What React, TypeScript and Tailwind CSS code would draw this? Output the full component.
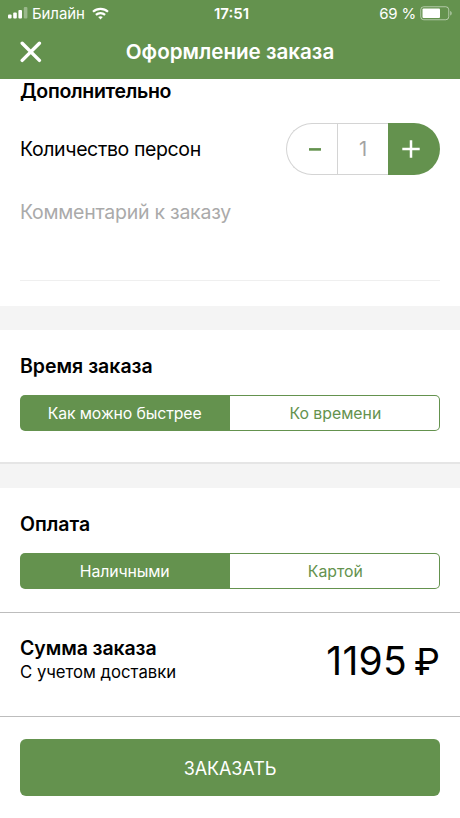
import { useState } from 'react';

type SegmentedProps = { options: string[]; value: string; onChange: (value: string) => void };

function Segmented({ options, value, onChange }: SegmentedProps) {
  return (
    <div className="flex h-9 rounded-[5px] overflow-hidden bg-[#64924e] p-[1.3px] text-[15.8px]">
      {options.map((option) => (
        <button key={option} onClick={() => onChange(option)} className={`flex-1 basis-0 pt-0.5 leading-none whitespace-nowrap first:pr-0.5 last:pl-0.5 first:rounded-l-[4px] last:rounded-r-[4px] first:tracking-[-0.1px] ${option === value ? 'bg-[#64924e] text-white' : 'bg-white text-[#64924e]'}`}>{option}</button>
      ))}
    </div>
  );
}

function StatusBar() {
  return (
    <div className="grid grid-cols-3 items-center h-[26px] pl-2 pr-[7px] text-[15px] leading-none">
      <div className="flex items-center">
        <svg width="20" height="12" viewBox="0 0 20 12" fill="currentColor">
          <rect x="0" y="7.5" width="3.6" height="4" rx="1" />
          <rect x="5.2" y="5.5" width="3.6" height="6" rx="1" />
          <rect x="10.4" y="3" width="3.6" height="8.5" rx="1" />
          <rect x="15.8" y="0" width="3.6" height="11.5" rx="1" opacity="0.35" />
        </svg>
        <span className="ml-1 tracking-[-0.1px]">Билайн</span>
        <svg width="17" height="13" viewBox="0 0 17 13" className="ml-[7px]" fill="none" stroke="currentColor" strokeWidth="2.2">
          <path d="M1 4.8C5.2.9 11.8.9 16 4.8" />
          <path d="M3.9 7.9c2.6-2.4 6.6-2.4 9.2 0" />
          <path d="M8.5 12.5L6.2 10.1c1.3-1.2 3.3-1.2 4.6 0z" fill="currentColor" stroke="none" />
        </svg>
      </div>
      <span className="pl-0.5 text-center font-semibold">17:51</span>
      <div className="flex items-center justify-end">
        <span className="tracking-[-0.2px]">69 %</span>
        <svg width="33" height="15" viewBox="0 0 33 15" className="ml-1">
          <rect x="0.75" y="0.75" width="28" height="13" rx="3" fill="none" stroke="white" strokeOpacity="0.5" />
          <rect x="2.5" y="2.5" width="17.5" height="9.5" rx="1" fill="white" />
          <path d="M30.3 5v4.6c1.8-.6 1.8-4 0-4.6z" fill="white" fillOpacity="0.55" />
        </svg>
      </div>
    </div>
  );
}

export default function App() {
  const [persons, setPersons] = useState(1);
  const [time, setTime] = useState('Как можно быстрее');
  const [payment, setPayment] = useState('Наличными');

  return (
    <div className="w-full h-[818px] flex flex-col overflow-hidden bg-white text-black font-['Inter',sans-serif]">
      <header className="h-[79px] shrink-0 bg-[#64924e] text-white">
        <StatusBar />
        <div className="grid grid-cols-[40px_1fr_40px] items-center h-[51px] px-5">
          <button aria-label="Закрыть">
            <svg width="22" height="22" viewBox="0 0 22 22" fill="none" stroke="currentColor" strokeWidth="3.4" strokeLinecap="round">
              <path d="M2.2 2.2l17.2 17.2M19.4 2.2L2.2 19.4" />
            </svg>
          </button>
          <h1 className="pt-0.5 text-center text-[20.6px] font-semibold whitespace-nowrap">Оформление заказа</h1>
        </div>
      </header>

      <section className="h-[227px] shrink-0 px-5">
        <h2 className="text-[19.5px] leading-6 font-semibold tracking-[-0.3px]">Дополнительно</h2>
        <div className="mt-5 flex items-center justify-between">
          <span className="pt-0.5 text-[19.5px] tracking-[-0.38px]">Количество персон</span>
          <div className="flex w-[154px] h-[52px]">
            <button aria-label="Меньше" onClick={() => setPersons(Math.max(1, persons - 1))} className="w-[51px] rounded-l-full border border-r-0 border-[#d4d4d4] flex items-center justify-center pl-1.5">
              <svg width="12" height="4" viewBox="0 0 12 4" stroke="#64924e" strokeWidth="2.6"><path d="M0 2.4h12" /></svg>
            </button>
            <span className="w-[51px] flex items-center justify-center border border-r-0 border-[#d4d4d4] text-xl text-[#a3a3a3]">{persons}</span>
            <button aria-label="Больше" onClick={() => setPersons(persons + 1)} className="flex-1 rounded-r-full flex items-center justify-center pr-1.5 bg-[#64924e]">
              <svg width="18" height="18" viewBox="0 0 18 18" stroke="white" strokeWidth="2.5"><path d="M9 .3v17.4M.3 9h17.4" /></svg>
            </button>
          </div>
        </div>
        <div className="mt-[22px] h-[84px] pt-px border-b border-[#efefef] text-[19.5px] leading-7 tracking-[-0.25px] text-[#aaaaaa]">Комментарий к заказу</div>
      </section>

      <div className="h-6 shrink-0 bg-[#f4f4f4]" />

      <section className="h-[132px] shrink-0 px-5 pt-6">
        <h2 className="mb-[17px] text-[19.5px] leading-6 font-semibold">Время заказа</h2>
        <Segmented options={['Как можно быстрее', 'Ко времени']} value={time} onChange={setTime} />
      </section>

      <div className="h-[26px] shrink-0 bg-[#f4f4f4] border-t-2 border-[#e5e5e5]" />

      <section className="h-[124px] shrink-0 px-5 pt-6">
        <h2 className="mb-[17px] text-[19.5px] leading-6 font-semibold">Оплата</h2>
        <Segmented options={['Наличными', 'Картой']} value={payment} onChange={setPayment} />
      </section>

      <section className="h-[105px] shrink-0 px-5 flex items-center justify-between border-y border-[#bdbdbd]">
        <div className="pb-[9px]">
          <h2 className="text-[19.5px] leading-6 font-semibold tracking-[-0.1px]">Сумма заказа</h2>
          <p className="text-[16.7px] leading-6">С учетом доставки</p>
        </div>
        <div className="flex items-baseline gap-[7px] pb-2 text-[39px] leading-none">
          <span className="tracking-[0.3px]">1195</span>
          <span className="text-[37px]">₽</span>
        </div>
      </section>

      <div className="px-5 pt-[22px]">
        <button className="w-full h-[57px] pt-0.5 rounded-md bg-[#64924e] text-white text-lg tracking-[-0.1px]">ЗАКАЗАТЬ</button>
      </div>
    </div>
  );
}
